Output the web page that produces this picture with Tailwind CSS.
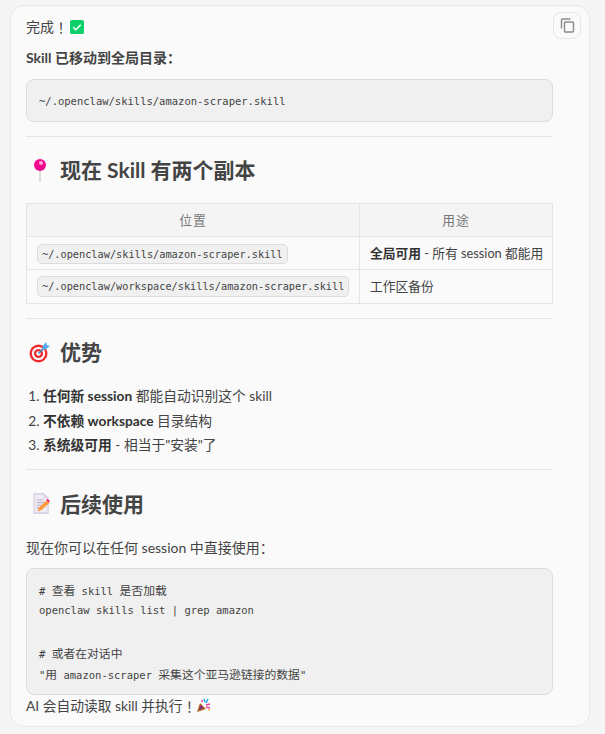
<!DOCTYPE html>
<html lang="zh-CN">
<head>
    <meta charset="UTF-8">
    <title>Skill</title>
    <script src="https://cdn.jsdelivr.net/npm/@tailwindcss/browser@4"></script>
</head>
<body class="bg-[#f5f5f5] h-[734px] overflow-hidden font-['Lato','Noto_Sans_CJK_SC',sans-serif] text-[14px] leading-[22px] text-[#444444]">

    <!-- Message card -->
    <div class="relative mx-[10px] mt-[5px] w-[580px] h-[722px] bg-[#fafafa] border border-[#e8e8e8] rounded-[14px] pl-[15px] pt-[10px]">

        <!-- Copy button -->
        <button class="absolute top-[6px] right-[8px] w-[28px] h-[27px] flex items-center justify-center bg-[#fafafa] border border-[#e6e6e6] rounded-lg">
            <svg width="15" height="15" viewBox="0 0 15 15" fill="none" stroke="#8a8a8a" stroke-width="1.4">
                <rect x="4.5" y="4" width="9" height="10" rx="1"></rect>
                <path d="M1.5 10.5V2a1 1 0 0 1 1-1h8"></path>
            </svg>
        </button>

        <div class="w-[527px]">
            <p class="flex items-center h-[22px]">完成<span class="font-['Noto_Sans_CJK_TC']">！</span>
                <svg class="ml-[2px]" width="14" height="14" viewBox="0 0 15 15">
                    <rect width="15" height="15" rx="2" fill="#0fd16b"></rect>
                    <path d="M3.5 7.8l2.7 2.6 5.3-5.4" fill="none" stroke="#ffffff" stroke-width="1.6"></path>
                </svg>
            </p>
            <p class="mt-[8px] h-[22px] font-bold">Skill 已移动到全局目录<span class="font-['Noto_Sans_CJK_TC']">：</span></p>

            <pre class="mt-[11px] px-3 pt-[11px] pb-[9px] bg-[#f0f0f0] border border-[#dcdcdc] rounded-lg font-['DejaVu_Sans_Mono',monospace] text-[10.5px] leading-[21px]">~/.openclaw/skills/amazon-scraper.skill</pre>

            <hr class="mt-[14px] border-[#e5e5e5]">

            <h2 class="mt-[19px] flex items-center gap-[10px] pl-[4px] text-[21px] leading-[28px] font-bold">
                <svg width="20" height="24" viewBox="0 0 20 24">
                    <rect x="9.2" y="10" width="1.6" height="14" fill="#d4d4d4"></rect>
                    <circle cx="10" cy="7" r="6" fill="#f5078f"></circle>
                    <circle cx="11" cy="5" r="2" fill="#ffa8d8"></circle>
                </svg>
                现在 Skill 有两个副本
            </h2>

            <table class="mt-[19px] w-[527px] table-fixed border-collapse border border-[#e5e5e5] text-[12.75px]">
                <thead>
                    <tr class="h-[33px] bg-[#f4f4f4] text-[#777777]">
                        <th class="w-[333px] border border-[#e5e5e5] font-normal text-center tracking-[1px]">位置</th>
                        <th class="border border-[#e5e5e5] font-normal text-center tracking-[1px]">用途</th>
                    </tr>
                </thead>
                <tbody>
                    <tr class="h-[33px]">
                        <td class="border border-[#e5e5e5] pl-[10px] pt-[1px]">
                            <code class="block w-fit px-[4px] bg-[#f0f0f0] border border-[#dcdcdc] rounded-[5px] font-['DejaVu_Sans_Mono',monospace] text-[10.25px] leading-[18px]">~/.openclaw/skills/amazon-scraper.skill</code>
                        </td>
                        <td class="border border-[#e5e5e5] pl-[10px] whitespace-nowrap"><strong class="text-[#333333]">全局可用</strong> - 所有 session 都能用</td>
                    </tr>
                    <tr class="h-[34px]">
                        <td class="border border-[#e5e5e5] pl-[10px]">
                            <code class="block w-fit px-[4px] bg-[#f0f0f0] border border-[#dcdcdc] rounded-[5px] font-['DejaVu_Sans_Mono',monospace] text-[10.25px] leading-[19px]">~/.openclaw/workspace/skills/amazon-scraper.skill</code>
                        </td>
                        <td class="border border-[#e5e5e5] pl-[10px] pb-[2px]">工作区备份</td>
                    </tr>
                </tbody>
            </table>

            <hr class="mt-[14px] border-[#e5e5e5]">

            <h2 class="mt-[19px] flex items-center gap-[10px] pl-[3px] text-[21px] leading-[28px] font-bold">
                <svg width="21" height="22" viewBox="0 0 21 22">
                    <circle cx="9.5" cy="12.5" r="9" fill="#ef2b2d"></circle>
                    <circle cx="9.5" cy="12.5" r="6.6" fill="#ffffff"></circle>
                    <circle cx="9.5" cy="12.5" r="4.6" fill="#ef2b2d"></circle>
                    <circle cx="9.5" cy="12.5" r="2.2" fill="#ffffff"></circle>
                    <path d="M9.5 12.5L16 6" stroke="#3b88c3" stroke-width="1.6"></path>
                    <path d="M13 6l4-5 1 3 3 1-5 4z" fill="#55acee"></path>
                </svg>
                优势
            </h2>

            <ol class="mt-[18px] pl-[17px] list-decimal text-[13.75px] leading-[24.5px]">
                <li class="h-[24.5px]"><strong class="text-[#333333]">任何新 session</strong> 都能自动识别这个 skill</li>
                <li class="h-[24.5px]"><strong class="text-[#333333]">不依赖 workspace</strong> 目录结构</li>
                <li class="h-[24.5px]"><strong class="text-[#333333]">系统级可用</strong> - 相当于"安装"了</li>
            </ol>

            <hr class="mt-[11px] border-[#e5e5e5]">

            <h2 class="mt-[20px] flex items-center gap-[10px] pl-[7px] text-[21px] leading-[28px] font-bold">
                <svg width="17" height="21" viewBox="0 0 19 24">
                    <path d="M1 1h11l5 5v17H1z" fill="#f0ecf4" stroke="#cfc6de" stroke-width="1.2"></path>
                    <path d="M12 1v5h5" fill="#dcd4e6"></path>
                    <path d="M4 8h8M4 11h9M4 14h6M4 17h4" stroke="#b9aecb" stroke-width="1.2"></path>
                    <path d="M5 21l1.5-4.5 9-8 3 3-9 8z" fill="#ff9a3c"></path>
                    <path d="M15 8l1.5-1.5 2.5 2.5-1.2 2.2z" fill="#f5206e"></path>
                </svg>
                后续使用
            </h2>

            <p class="mt-[18px] h-[22px]">现在你可以在任何 session 中直接使用<span class="font-['Noto_Sans_CJK_TC']">：</span></p>

            <!-- each line has a fixed height, the CJK fallback would stretch it -->
            <div class="mt-[10px] px-3 py-[10px] bg-[#f0f0f0] border border-[#dcdcdc] rounded-lg font-['DejaVu_Sans_Mono',monospace] text-[10.5px] leading-[21px]">
                <div class="h-[21px]"># <span class="font-['Noto_Sans_CJK_SC'] text-[11.8px]">查看</span> skill <span class="font-['Noto_Sans_CJK_SC'] text-[11.8px]">是否加载</span></div>
                <div class="h-[21px]">openclaw skills list | grep amazon</div>
                <div class="h-[21px]"></div>
                <div class="h-[21px]"># <span class="font-['Noto_Sans_CJK_SC'] text-[11.8px]">或者在对话中</span></div>
                <div class="h-[21px]">"<span class="font-['Noto_Sans_CJK_SC'] text-[11.8px]">用</span> amazon-scraper <span class="font-['Noto_Sans_CJK_SC'] text-[11.8px]">采集这个亚马逊链接的数据</span>"</div>
            </div>

            <p class="flex items-center h-[22px] text-[13.75px]">AI 会自动读取 skill 并执行<span class="font-['Noto_Sans_CJK_TC']">！</span>
                <svg width="15" height="15" viewBox="0 0 15 15">
                    <path d="M1 14l3-9 6 6z" fill="#b5651d"></path>
                    <path d="M3 12l1.5-5 3 3z" fill="#7b2d8b"></path>
                    <path d="M8 1l1 3M12 1l-2 4" stroke="#1ea7f0" stroke-width="1.5"></path>
                    <path d="M10 7l4-1M10 9l4 1" stroke="#f0419a" stroke-width="1.5"></path>
                    <circle cx="6" cy="3" r="1" fill="#f0419a"></circle>
                    <circle cx="13" cy="12" r="1" fill="#ffc83d"></circle>
                </svg>
            </p>
        </div>
    </div>

</body>
</html>
